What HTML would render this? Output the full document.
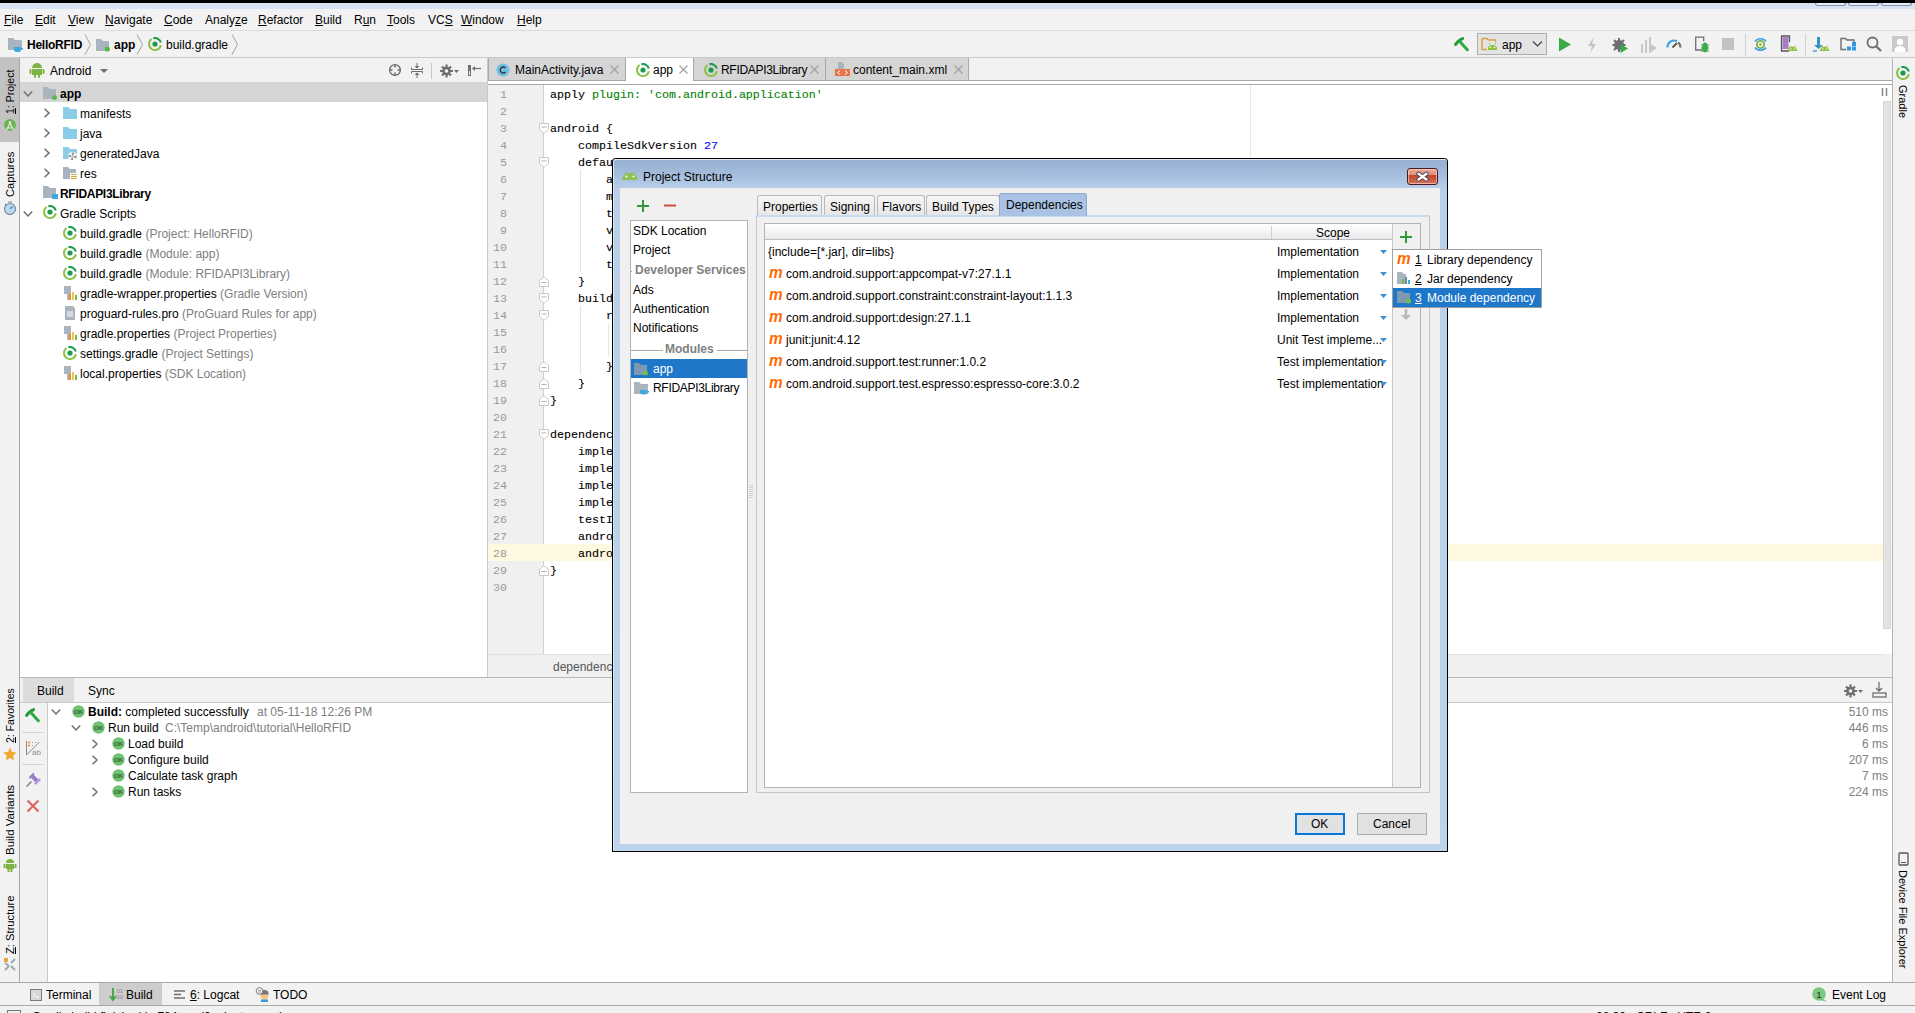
<!DOCTYPE html><html><head><meta charset="utf-8"><style>
*{margin:0;padding:0;box-sizing:border-box}
html,body{width:1915px;height:1013px;overflow:hidden;background:#f2f2f2;position:relative}
body>div,body>svg{position:absolute}
.s{position:absolute;font-family:"Liberation Sans",sans-serif;font-size:12px;line-height:14px;white-space:pre;color:#000}
.b{font-weight:bold}
.g{color:#808080}
.m{position:absolute;font-family:"Liberation Mono",monospace;font-size:11.67px;line-height:14px;white-space:pre;color:#000;-webkit-text-stroke:0.1px currentColor}
.ln{-webkit-text-stroke:0}
u{text-decoration:underline}
</style></head><body>
<div style="left:0px;top:0px;width:1915px;height:3px;background:#000"></div>
<div style="left:0px;top:3px;width:1915px;height:6px;background:#d6e3f1"></div>
<div style="left:1815px;top:2px;width:31px;height:4px;background:#e6eefa;border:1px solid #8590a8;border-top:none;border-radius:0 0 3px 3px"></div>
<div style="left:1848px;top:2px;width:31px;height:4px;background:#e6eefa;border:1px solid #8590a8;border-top:none;border-radius:0 0 3px 3px"></div>
<div style="left:1881px;top:2px;width:31px;height:4px;background:#e6eefa;border:1px solid #8590a8;border-top:none;border-radius:0 0 3px 3px"></div>
<div style="left:0px;top:0px;width:1915px;height:3px;background:#000"></div>
<div style="left:0px;top:9px;width:1915px;height:22px;background:#f2f2f2"></div>
<div style="left:0px;top:30px;width:1915px;height:1px;background:#dadada"></div>
<div class="s" style="left:4px;top:13px;"><u>F</u>ile</div>
<div class="s" style="left:35px;top:13px;"><u>E</u>dit</div>
<div class="s" style="left:68px;top:13px;"><u>V</u>iew</div>
<div class="s" style="left:105px;top:13px;"><u>N</u>avigate</div>
<div class="s" style="left:164px;top:13px;"><u>C</u>ode</div>
<div class="s" style="left:205px;top:13px;">Analy<u>z</u>e</div>
<div class="s" style="left:258px;top:13px;"><u>R</u>efactor</div>
<div class="s" style="left:315px;top:13px;"><u>B</u>uild</div>
<div class="s" style="left:354px;top:13px;">R<u>u</u>n</div>
<div class="s" style="left:387px;top:13px;"><u>T</u>ools</div>
<div class="s" style="left:428px;top:13px;">VC<u>S</u></div>
<div class="s" style="left:461px;top:13px;"><u>W</u>indow</div>
<div class="s" style="left:517px;top:13px;"><u>H</u>elp</div>
<div style="left:0px;top:31px;width:1915px;height:26px;background:#f2f2f2"></div>
<div style="left:0px;top:57px;width:1915px;height:1px;background:#c9c9c9"></div>
<svg style="position:absolute;left:7px;top:37px;" width="18" height="16" viewBox="0 0 18 16"><path d="M1 1h5l2 2h7v10h-14z" fill="#a9b4bf"/><path d="M7 10h7v2.5a2.5 2.5 0 0 1-2.5 2.5h-2a2.5 2.5 0 0 1-2.5-2.5z" fill="#40a6de"/><path d="M14 11h2v1.5h-2z" fill="#40a6de"/></svg>
<div class="s b" style="left:27px;top:38px;letter-spacing:-0.25px">HelloRFID</div>
<svg style="position:absolute;left:84px;top:34px;" width="8" height="21" viewBox="0 0 8 21"><path d="M1 0.5L6.5 10.5L1 20.5" fill="none" stroke="#a0a0a0" stroke-width="1"/></svg>
<svg style="position:absolute;left:95px;top:38px;" width="16" height="14" viewBox="0 0 16 14"><path d="M1 1h5l2 2h6v10h-13z" fill="#a9b4bf"/><circle cx="12.3" cy="11" r="2.6" fill="#59b84a"/></svg>
<div class="s b" style="left:114px;top:38px;">app</div>
<svg style="position:absolute;left:136px;top:34px;" width="8" height="21" viewBox="0 0 8 21"><path d="M1 0.5L6.5 10.5L1 20.5" fill="none" stroke="#a0a0a0" stroke-width="1"/></svg>
<svg style="position:absolute;left:148px;top:37px;" width="14" height="14" viewBox="0 0 14 14"><path d="M12.87 8.25A6 6 0 1 1 3.64 2.03" fill="none" stroke="#8bc34a" stroke-width="2"/><path d="M5.35 1.23A6 6 0 0 1 12.82 5.55" fill="none" stroke="#1d9a4e" stroke-width="2"/><circle cx="7" cy="7" r="2.6" fill="#1d9a4e"/></svg>
<div class="s" style="left:166px;top:38px;">build.gradle</div>
<svg style="position:absolute;left:231px;top:34px;" width="8" height="21" viewBox="0 0 8 21"><path d="M1 0.5L6.5 10.5L1 20.5" fill="none" stroke="#a0a0a0" stroke-width="1"/></svg>
<svg style="position:absolute;left:1452px;top:35px;" width="17" height="17" viewBox="0 0 17 17"><path d="M3.6 9.4Q6.5 5 10.6 3.6" fill="none" stroke="#1f9a3a" stroke-width="3" stroke-linecap="round"/><path d="M7.8 6.5L15.3 14.8" fill="none" stroke="#2eaa44" stroke-width="3" stroke-linecap="round"/></svg>
<div style="left:1477px;top:33px;width:70px;height:22px;background:#e4e4e4;border:1px solid #adadad"></div>
<svg style="position:absolute;left:1481px;top:37px;" width="18" height="15" viewBox="0 0 18 15"><path d="M1 1.5h5l1.5 1.5h7v2M1 1.5v11h5" fill="none" stroke="#d9a343" stroke-width="1.5"/><path d="M7 13a4.5 4 0 0 1 9 0z" fill="#8fbf3f" transform="translate(0 -1)"/><rect x="7" y="10" width="9" height="3" fill="#8fbf3f"/><circle cx="9.5" cy="10.5" r="0.8" fill="#fff"/><circle cx="13.5" cy="10.5" r="0.8" fill="#fff"/><path d="M8 6l1 1.5M15 6l-1 1.5" stroke="#8fbf3f"/></svg>
<div class="s" style="left:1502px;top:38px;">app</div>
<svg style="position:absolute;left:1532px;top:40px;" width="11" height="8" viewBox="0 0 11 8"><path d="M1 1.5l4.5 4.5 4.5-4.5" fill="none" stroke="#444" stroke-width="1.2"/></svg>
<svg style="position:absolute;left:1558px;top:36px;" width="14" height="17" viewBox="0 0 14 17"><path d="M1 1.5l12 7-12 7z" fill="#3aaa48"/></svg>
<svg style="position:absolute;left:1587px;top:37px;" width="12" height="16" viewBox="0 0 12 16"><path d="M7 0l-6 9h4l-2 7 6-9h-4z" fill="#c4c4c4"/></svg>
<svg style="position:absolute;left:1611px;top:36px;" width="18" height="17" viewBox="0 0 18 17"><circle cx="8" cy="9" r="5" fill="#6e6e6e"/><path d="M8 2v14M1.5 9h13M3 4l10 10M13 4l-10 10" stroke="#6e6e6e" stroke-width="2"/><path d="M9.5 8l7.5 4.5-7.5 4.5z" fill="#3aaa48"/></svg>
<svg style="position:absolute;left:1640px;top:36px;" width="17" height="17" viewBox="0 0 17 17"><path d="M1 8h2v9h-2zM5 4h2v13h-2zM9 1h2v16h-2z" fill="#c8c8c8"/><path d="M9 7l8 5-8 5z" fill="#c8c8c8"/></svg>
<svg style="position:absolute;left:1666px;top:37px;" width="16" height="12" viewBox="0 0 16 12"><path d="M1.5 10.5A6.5 6.5 0 0 1 11 4.3" fill="none" stroke="#3aa0e8" stroke-width="2.2"/><path d="M12.2 5.3A6.5 6.5 0 0 1 14.5 10.5" fill="none" stroke="#6e6e6e" stroke-width="2.2"/><path d="M6.5 10.5l4.5-4.5" stroke="#555" stroke-width="2"/></svg>
<svg style="position:absolute;left:1694px;top:36px;" width="16" height="18" viewBox="0 0 16 18"><path d="M8 14h-6.3v-12.8h8v4" fill="none" stroke="#6e6e6e" stroke-width="1.3"/><ellipse cx="11" cy="11.5" rx="3" ry="5" fill="#3aaa48"/><path d="M7 9h8M7 12h8M7 15h8" stroke="#3aaa48" stroke-width="1.2"/></svg>
<div style="left:1722px;top:38px;width:12px;height:12px;background:#c2c2c2"></div>
<div style="left:1745px;top:34px;width:1px;height:22px;background:#d0d0d0"></div>
<svg style="position:absolute;left:1753px;top:36px;" width="15" height="17" viewBox="0 0 15 17"><path d="M2 5.5A6.5 6 0 0 1 13 5.5" fill="none" stroke="#3aa0e8" stroke-width="1.6"/><path d="M13 11.5A6.5 6 0 0 1 2 11.5" fill="none" stroke="#3aa0e8" stroke-width="1.6"/><circle cx="7.5" cy="8.5" r="3.6" fill="none" stroke="#7cb342" stroke-width="1.8"/><circle cx="7.5" cy="8.5" r="1.2" fill="#7cb342"/></svg>
<svg style="position:absolute;left:1780px;top:35px;" width="18" height="18" viewBox="0 0 18 18"><path d="M9 16h-7.5v-15h8v6" fill="none" stroke="#555" stroke-width="1.3"/><rect x="2.5" y="2" width="6" height="12" fill="#a57fc0"/><g transform="translate(8 10)"><path d="M0 6a4.5 4.5 0 0 1 9 0z" fill="#8fbf3f"/><circle cx="2.8" cy="4" r="0.7" fill="#fff"/><circle cx="6.2" cy="4" r="0.7" fill="#fff"/><path d="M1 0.5l1 1.5M8 0.5l-1 1.5" stroke="#8fbf3f" stroke-width="0.9"/></g></svg>
<div style="left:1805px;top:34px;width:1px;height:22px;background:#d0d0d0"></div>
<svg style="position:absolute;left:1812px;top:36px;" width="18" height="17" viewBox="0 0 18 17"><path d="M5 1h3v8h3l-4.5 4-4.5-4h3z" fill="#3592c4"/><path d="M1 15h4" stroke="#3592c4" stroke-width="1.3"/><g transform="translate(8 9)"><path d="M0 6a4.5 4.5 0 0 1 9 0z" fill="#8fbf3f"/><circle cx="2.8" cy="4" r="0.7" fill="#fff"/><circle cx="6.2" cy="4" r="0.7" fill="#fff"/><path d="M1 0.5l1 1.5M8 0.5l-1 1.5" stroke="#8fbf3f" stroke-width="0.9"/></g></svg>
<svg style="position:absolute;left:1840px;top:37px;" width="17" height="14" viewBox="0 0 17 14"><path d="M6 12.5h-5v-11h4.5l1.5 1.5h7v2.5" fill="none" stroke="#6e6e6e" stroke-width="1.4"/><rect x="12" y="5" width="4" height="4" fill="#2c9ae0"/><rect x="7" y="9.5" width="4" height="4" fill="#2c9ae0"/><rect x="12" y="9.5" width="4" height="4" fill="#2c9ae0"/></svg>
<svg style="position:absolute;left:1866px;top:36px;" width="16" height="16" viewBox="0 0 16 16"><circle cx="6.5" cy="6.5" r="5" fill="none" stroke="#6e6e6e" stroke-width="1.8"/><path d="M10 10l5 5" stroke="#6e6e6e" stroke-width="2.2"/></svg>
<svg style="position:absolute;left:1892px;top:36px;" width="16" height="16" viewBox="0 0 16 16"><rect x="0" y="0" width="16" height="16" fill="#c8c8c8"/><circle cx="8" cy="6" r="3.2" fill="#fff"/><path d="M2.5 16v-2a5.5 4 0 0 1 11 0v2z" fill="#fff"/></svg>
<div style="left:0px;top:58px;width:19px;height:924px;background:#f2f2f2"></div>
<div style="left:19px;top:58px;width:1px;height:924px;background:#a8a8a8"></div>
<div style="left:20px;top:58px;width:467px;height:24px;background:#f2f2f2"></div>
<div style="left:20px;top:82px;width:467px;height:595px;background:#fff"></div>
<div style="left:20px;top:82px;width:467px;height:20px;background:#d5d5d5"></div>
<div style="left:487px;top:58px;width:1px;height:620px;background:#c9c9c9"></div>
<div style="left:0px;top:58px;width:19px;height:84px;background:#c2c2c2"></div>
<div class="s" style="left:3px;top:114px;font-size:10.5px;transform-origin:0 0;transform:rotate(-90deg)"><u>1</u>: Project</div>
<svg style="position:absolute;left:3px;top:118px;" width="14" height="14" viewBox="0 0 14 14"><circle cx="7" cy="7" r="6" fill="#6db34f"/><path d="M3.5 12l3.5-7 3.5 7M5 10h4" fill="none" stroke="#e8e8e8" stroke-width="1.2"/><circle cx="7" cy="4.5" r="1.3" fill="#e8e8e8"/></svg>
<div class="s" style="left:3px;top:197px;font-size:11.2px;transform-origin:0 0;transform:rotate(-90deg)">Captures</div>
<svg style="position:absolute;left:3px;top:201px;" width="14" height="14" viewBox="0 0 14 14"><circle cx="7" cy="8" r="5.5" fill="#b9d8f2" stroke="#7b8797" stroke-width="1.2"/><path d="M7 8l2.5-2.5" stroke="#4f8fc7" stroke-width="1.5"/><path d="M5 1h4M2 3l1.5 1.5" stroke="#7b8797" stroke-width="1.2"/></svg>
<svg style="position:absolute;left:29px;top:62px;" width="16" height="16" viewBox="0 0 16 16"><path d="M3 6a5 5 0 0 1 10 0z" fill="#7cb342"/><path d="M5 2l1.5 2M11 2l-1.5 2" stroke="#7cb342" stroke-width="1"/><rect x="3" y="7" width="10" height="6" fill="#7cb342"/><rect x="0.5" y="7" width="2" height="5" rx="1" fill="#7cb342"/><rect x="13.5" y="7" width="2" height="5" rx="1" fill="#7cb342"/><rect x="5" y="12" width="2" height="4" rx="1" fill="#7cb342"/><rect x="9" y="12" width="2" height="4" rx="1" fill="#7cb342"/></svg>
<div class="s" style="left:50px;top:64px;">Android</div>
<svg style="position:absolute;left:100px;top:69px;" width="9" height="5" viewBox="0 0 9 5"><path d="M0 0h8l-4 4z" fill="#6e6e6e"/></svg>
<svg style="position:absolute;left:388px;top:63px;" width="14" height="14" viewBox="0 0 14 14"><circle cx="7" cy="7" r="5.4" fill="none" stroke="#6e6e6e" stroke-width="1.4"/><path d="M7 2v2.5M7 9.5v2.5M2 7h2.5M9.5 7h2.5" stroke="#6e6e6e" stroke-width="1.6"/></svg>
<svg style="position:absolute;left:411px;top:63px;" width="12" height="15" viewBox="0 0 12 15"><path d="M0.5 4.5v2h11v-2M0.5 10.5v-2h11v2" fill="none" stroke="#6e6e6e" stroke-width="1"/><path d="M6 0v5M6 15v-5" stroke="#6e6e6e" stroke-width="1"/><path d="M3.5 3l2.5 2.5 2.5-2.5zM3.5 12l2.5-2.5 2.5 2.5z" fill="#6e6e6e"/></svg>
<div style="left:431px;top:63px;width:1px;height:16px;background:#c8c8c8"></div>
<svg style="position:absolute;left:440px;top:64px;" width="20" height="14" viewBox="0 0 20 14"><circle cx="6.5" cy="7" r="4.3" fill="#6e6e6e"/><circle cx="6.5" cy="7" r="1.6" fill="#f2f2f2"/><path d="M6.5 0.5v13M0 7h13M2 2.5l9 9M11 2.5l-9 9" stroke="#6e6e6e" stroke-width="2.2"/><circle cx="6.5" cy="7" r="1.8" fill="#f2f2f2"/><path d="M14 6h5l-2.5 3z" fill="#6e6e6e"/></svg>
<svg style="position:absolute;left:467px;top:64px;" width="14" height="13" viewBox="0 0 14 13"><rect x="1" y="1" width="3" height="11" fill="#6e6e6e"/><rect x="2" y="7" width="1" height="4" fill="#f2f2f2"/><path d="M6 4.5h8" stroke="#6e6e6e" stroke-width="1.2"/><path d="M5 4.5l3-2.5v5z" fill="#6e6e6e"/></svg>
<svg style="position:absolute;left:23px;top:90px;" width="10" height="8" viewBox="0 0 10 8"><path d="M0.8 1.5l4.2 4.5 4.2-4.5" fill="none" stroke="#6e6e6e" stroke-width="1.5"/></svg>
<svg style="position:absolute;left:42px;top:86px;" width="16" height="14" viewBox="0 0 16 14"><path d="M1 1h5l2 2h6v10h-13z" fill="#a9b4bf"/><circle cx="12.5" cy="11.5" r="2.5" fill="#59b84a"/></svg>
<div class="s b" style="left:60px;top:87px;">app</div>
<svg style="position:absolute;left:43px;top:108px;" width="8" height="10" viewBox="0 0 8 10"><path d="M1.5 0.8l4.5 4.2-4.5 4.2" fill="none" stroke="#6e6e6e" stroke-width="1.5"/></svg>
<svg style="position:absolute;left:62px;top:106px;" width="16" height="14" viewBox="0 0 16 14"><path d="M1 1h5l2 2h7v10h-14z" fill="#8acde9"/></svg>
<div class="s" style="left:80px;top:107px;">manifests</div>
<svg style="position:absolute;left:43px;top:128px;" width="8" height="10" viewBox="0 0 8 10"><path d="M1.5 0.8l4.5 4.2-4.5 4.2" fill="none" stroke="#6e6e6e" stroke-width="1.5"/></svg>
<svg style="position:absolute;left:62px;top:126px;" width="16" height="14" viewBox="0 0 16 14"><path d="M1 1h5l2 2h7v10h-14z" fill="#8acde9"/></svg>
<div class="s" style="left:80px;top:127px;">java</div>
<svg style="position:absolute;left:43px;top:148px;" width="8" height="10" viewBox="0 0 8 10"><path d="M1.5 0.8l4.5 4.2-4.5 4.2" fill="none" stroke="#6e6e6e" stroke-width="1.5"/></svg>
<svg style="position:absolute;left:62px;top:146px;" width="16" height="14" viewBox="0 0 16 14"><path d="M1 1h5l2 2h7v10h-14z" fill="#8acde9"/><circle cx="10.5" cy="10.5" r="4.5" fill="#fff"/><path d="M10.5 10.5l-1-3.5a2 2 0 0 1 3 .5zM10.5 10.5l3.5-1a2 2 0 0 1-.5 3zM10.5 10.5l1 3.5a2 2 0 0 1-3-.5zM10.5 10.5l-3.5 1a2 2 0 0 1 .5-3z" fill="#999"/></svg>
<div class="s" style="left:80px;top:147px;">generatedJava</div>
<svg style="position:absolute;left:43px;top:168px;" width="8" height="10" viewBox="0 0 8 10"><path d="M1.5 0.8l4.5 4.2-4.5 4.2" fill="none" stroke="#6e6e6e" stroke-width="1.5"/></svg>
<svg style="position:absolute;left:62px;top:166px;" width="16" height="14" viewBox="0 0 16 14"><path d="M1 1h5l2 2h6v10h-13z" fill="#a9b4bf"/><rect x="8" y="7" width="8" height="8" fill="#fff"/><path d="M9 8.5h6M9 10.5h6M9 12.5h6M9 14.5h6" stroke="#e0a040" stroke-width="1"/></svg>
<div class="s" style="left:80px;top:167px;">res</div>
<svg style="position:absolute;left:42px;top:185px;" width="16" height="14" viewBox="0 0 16 14"><path d="M1 1h5l2 2h6v10h-13z" fill="#a9b4bf"/><rect x="10" y="9" width="6" height="5" fill="#40a6de"/></svg>
<div class="s b" style="left:60px;top:187px;letter-spacing:-0.3px">RFIDAPI3Library</div>
<svg style="position:absolute;left:23px;top:210px;" width="10" height="8" viewBox="0 0 10 8"><path d="M0.8 1.5l4.2 4.5 4.2-4.5" fill="none" stroke="#6e6e6e" stroke-width="1.5"/></svg>
<svg style="position:absolute;left:43px;top:205px;" width="14" height="14" viewBox="0 0 14 14"><path d="M12.87 8.25A6 6 0 1 1 3.64 2.03" fill="none" stroke="#8bc34a" stroke-width="2"/><path d="M5.35 1.23A6 6 0 0 1 12.82 5.55" fill="none" stroke="#1d9a4e" stroke-width="2"/><circle cx="7" cy="7" r="2.6" fill="#1d9a4e"/></svg>
<div class="s" style="left:60px;top:207px;">Gradle Scripts</div>
<svg style="position:absolute;left:63px;top:226px;" width="14" height="14" viewBox="0 0 14 14"><path d="M12.87 8.25A6 6 0 1 1 3.64 2.03" fill="none" stroke="#8bc34a" stroke-width="2"/><path d="M5.35 1.23A6 6 0 0 1 12.82 5.55" fill="none" stroke="#1d9a4e" stroke-width="2"/><circle cx="7" cy="7" r="2.6" fill="#1d9a4e"/></svg>
<div class="s" style="left:80px;top:227px">build.gradle <span class="g">(Project: HelloRFID)</span></div>
<svg style="position:absolute;left:63px;top:246px;" width="14" height="14" viewBox="0 0 14 14"><path d="M12.87 8.25A6 6 0 1 1 3.64 2.03" fill="none" stroke="#8bc34a" stroke-width="2"/><path d="M5.35 1.23A6 6 0 0 1 12.82 5.55" fill="none" stroke="#1d9a4e" stroke-width="2"/><circle cx="7" cy="7" r="2.6" fill="#1d9a4e"/></svg>
<div class="s" style="left:80px;top:247px">build.gradle <span class="g">(Module: app)</span></div>
<svg style="position:absolute;left:63px;top:266px;" width="14" height="14" viewBox="0 0 14 14"><path d="M12.87 8.25A6 6 0 1 1 3.64 2.03" fill="none" stroke="#8bc34a" stroke-width="2"/><path d="M5.35 1.23A6 6 0 0 1 12.82 5.55" fill="none" stroke="#1d9a4e" stroke-width="2"/><circle cx="7" cy="7" r="2.6" fill="#1d9a4e"/></svg>
<div class="s" style="left:80px;top:267px">build.gradle <span class="g">(Module: RFIDAPI3Library)</span></div>
<svg style="position:absolute;left:63px;top:285px;" width="14" height="16" viewBox="0 0 14 16"><path d="M1 1h7v4h-3v4h-4z" fill="#a9b4bf"/><path d="M4 4h4v11h-4z" fill="#a9b4bf"/><rect x="6" y="9" width="2" height="6" fill="#f08a24"/><rect x="9" y="7" width="2" height="8" fill="#f5c342"/><rect x="12" y="10" width="2" height="5" fill="#6abf4b"/></svg>
<div class="s" style="left:80px;top:287px">gradle-wrapper.properties <span class="g">(Gradle Version)</span></div>
<svg style="position:absolute;left:63px;top:305px;" width="14" height="16" viewBox="0 0 14 16"><path d="M2 1h8l2 2v12h-10z" fill="#a9b4bf"/><path d="M4 7h6M4 9h6M4 11h6" stroke="#fff" stroke-width="1"/></svg>
<div class="s" style="left:80px;top:307px">proguard-rules.pro <span class="g">(ProGuard Rules for app)</span></div>
<svg style="position:absolute;left:63px;top:325px;" width="14" height="16" viewBox="0 0 14 16"><path d="M1 1h7v4h-3v4h-4z" fill="#a9b4bf"/><path d="M4 4h4v11h-4z" fill="#a9b4bf"/><rect x="6" y="9" width="2" height="6" fill="#f08a24"/><rect x="9" y="7" width="2" height="8" fill="#f5c342"/><rect x="12" y="10" width="2" height="5" fill="#6abf4b"/></svg>
<div class="s" style="left:80px;top:327px">gradle.properties <span class="g">(Project Properties)</span></div>
<svg style="position:absolute;left:63px;top:346px;" width="14" height="14" viewBox="0 0 14 14"><path d="M12.87 8.25A6 6 0 1 1 3.64 2.03" fill="none" stroke="#8bc34a" stroke-width="2"/><path d="M5.35 1.23A6 6 0 0 1 12.82 5.55" fill="none" stroke="#1d9a4e" stroke-width="2"/><circle cx="7" cy="7" r="2.6" fill="#1d9a4e"/></svg>
<div class="s" style="left:80px;top:347px">settings.gradle <span class="g">(Project Settings)</span></div>
<svg style="position:absolute;left:63px;top:365px;" width="14" height="16" viewBox="0 0 14 16"><path d="M1 1h7v4h-3v4h-4z" fill="#a9b4bf"/><path d="M4 4h4v11h-4z" fill="#a9b4bf"/><rect x="6" y="9" width="2" height="6" fill="#f08a24"/><rect x="9" y="7" width="2" height="8" fill="#f5c342"/><rect x="12" y="10" width="2" height="5" fill="#6abf4b"/></svg>
<div class="s" style="left:80px;top:367px">local.properties <span class="g">(SDK Location)</span></div>
<div style="left:488px;top:58px;width:1405px;height:22px;background:#f2f2f2"></div>
<div style="left:488px;top:80px;width:1404px;height:1px;background:#a8a8a8"></div>
<div style="left:488px;top:81px;width:1404px;height:3px;background:#fff"></div>
<div style="left:488px;top:84px;width:1404px;height:1px;background:#a8a8a8"></div>
<div style="left:488px;top:58px;width:138px;height:22px;background:#d5d5d5;border-right:1px solid #a8a8a8;border-left:1px solid #a8a8a8"></div>
<div style="left:626px;top:58px;width:68px;height:23px;background:#fff;border-right:1px solid #a8a8a8"></div>
<div style="left:694px;top:58px;width:132px;height:22px;background:#d5d5d5;border-right:1px solid #a8a8a8"></div>
<div style="left:826px;top:58px;width:143px;height:22px;background:#d5d5d5;border-right:1px solid #a8a8a8"></div>
<svg style="position:absolute;left:496px;top:63px;" width="14" height="14" viewBox="0 0 14 14"><circle cx="7" cy="7" r="6.5" fill="#6ec0e6"/><path d="M9.5 5a3 3 0 1 0 0 4" fill="none" stroke="#333" stroke-width="1.4"/></svg>
<div class="s" style="left:515px;top:63px;">MainActivity.java</div>
<svg style="position:absolute;left:610px;top:65px;" width="9" height="9" viewBox="0 0 9 9"><path d="M0.5 0.5l8 8M8.5 0.5l-8 8" stroke="#a0a0a0" stroke-width="1.1"/></svg>
<svg style="position:absolute;left:636px;top:63px;" width="14" height="14" viewBox="0 0 14 14"><path d="M12.87 8.25A6 6 0 1 1 3.64 2.03" fill="none" stroke="#8bc34a" stroke-width="2"/><path d="M5.35 1.23A6 6 0 0 1 12.82 5.55" fill="none" stroke="#1d9a4e" stroke-width="2"/><circle cx="7" cy="7" r="2.6" fill="#1d9a4e"/></svg>
<div class="s" style="left:653px;top:63px;">app</div>
<svg style="position:absolute;left:679px;top:65px;" width="9" height="9" viewBox="0 0 9 9"><path d="M0.5 0.5l8 8M8.5 0.5l-8 8" stroke="#a0a0a0" stroke-width="1.1"/></svg>
<svg style="position:absolute;left:704px;top:63px;" width="14" height="14" viewBox="0 0 14 14"><path d="M12.87 8.25A6 6 0 1 1 3.64 2.03" fill="none" stroke="#8bc34a" stroke-width="2"/><path d="M5.35 1.23A6 6 0 0 1 12.82 5.55" fill="none" stroke="#1d9a4e" stroke-width="2"/><circle cx="7" cy="7" r="2.6" fill="#1d9a4e"/></svg>
<div class="s" style="left:721px;top:63px;letter-spacing:-0.3px">RFIDAPI3Library</div>
<svg style="position:absolute;left:810px;top:65px;" width="9" height="9" viewBox="0 0 9 9"><path d="M0.5 0.5l8 8M8.5 0.5l-8 8" stroke="#a0a0a0" stroke-width="1.1"/></svg>
<svg style="position:absolute;left:835px;top:61px;" width="16" height="16" viewBox="0 0 16 16"><path d="M3 1h5v4h-3v3h-2z" fill="#a9b4bf"/><path d="M5 3h4v5h-4z" fill="#a9b4bf"/><rect x="0" y="8" width="15" height="7" fill="#e8744a"/><path d="M5 9.5l-2.5 2 2.5 2M10 9.5l2.5 2-2.5 2" fill="none" stroke="#fff" stroke-width="1"/></svg>
<div class="s" style="left:853px;top:63px;">content_main.xml</div>
<svg style="position:absolute;left:954px;top:65px;" width="9" height="9" viewBox="0 0 9 9"><path d="M0.5 0.5l8 8M8.5 0.5l-8 8" stroke="#a0a0a0" stroke-width="1.1"/></svg>
<div style="left:488px;top:85px;width:55px;height:569px;background:#f0f0f0"></div>
<div style="left:543px;top:85px;width:1px;height:569px;background:#d0d0d0"></div>
<div style="left:544px;top:85px;width:1338px;height:569px;background:#fff"></div>
<div style="left:1250px;top:85px;width:1px;height:569px;background:#e8e8e8"></div>
<div style="left:488px;top:544px;width:1394px;height:17px;background:#fff8e0"></div>
<div style="left:1882px;top:85px;width:10px;height:569px;background:#fff"></div>
<div style="left:1882px;top:544px;width:10px;height:17px;background:#fff8e0"></div>
<div style="left:1883px;top:101px;width:8px;height:528px;background:#e3e3e3;border:1px solid #d6d6d6"></div>
<div style="left:580px;top:170px;width:1px;height:102px;background:#e4e4e4"></div>
<div style="left:580px;top:306px;width:1px;height:68px;background:#e4e4e4"></div>
<div style="left:608px;top:323px;width:1px;height:34px;background:#e4e4e4"></div>
<div class="m ln" style="left:500px;top:88px;color:#999">1</div>
<div class="m" style="left:550px;top:88px">apply <span style="color:#008000">plugin: &#x27;com.android.application&#x27;</span></div>
<div class="m ln" style="left:500px;top:105px;color:#999">2</div>
<div class="m ln" style="left:500px;top:122px;color:#999">3</div>
<div class="m" style="left:550px;top:122px">android {</div>
<div class="m ln" style="left:500px;top:139px;color:#999">4</div>
<div class="m" style="left:550px;top:139px">    compileSdkVersion <span style="color:#0000ff">27</span></div>
<div class="m ln" style="left:500px;top:156px;color:#999">5</div>
<div class="m" style="left:550px;top:156px">    defau</div>
<div class="m ln" style="left:500px;top:173px;color:#999">6</div>
<div class="m" style="left:550px;top:173px">        a</div>
<div class="m ln" style="left:500px;top:190px;color:#999">7</div>
<div class="m" style="left:550px;top:190px">        m</div>
<div class="m ln" style="left:500px;top:207px;color:#999">8</div>
<div class="m" style="left:550px;top:207px">        t</div>
<div class="m ln" style="left:500px;top:224px;color:#999">9</div>
<div class="m" style="left:550px;top:224px">        v</div>
<div class="m ln" style="left:493px;top:241px;color:#999">10</div>
<div class="m" style="left:550px;top:241px">        v</div>
<div class="m ln" style="left:493px;top:258px;color:#999">11</div>
<div class="m" style="left:550px;top:258px">        t</div>
<div class="m ln" style="left:493px;top:275px;color:#999">12</div>
<div class="m" style="left:550px;top:275px">    }</div>
<div class="m ln" style="left:493px;top:292px;color:#999">13</div>
<div class="m" style="left:550px;top:292px">    build</div>
<div class="m ln" style="left:493px;top:309px;color:#999">14</div>
<div class="m" style="left:550px;top:309px">        r</div>
<div class="m ln" style="left:493px;top:326px;color:#999">15</div>
<div class="m ln" style="left:493px;top:343px;color:#999">16</div>
<div class="m ln" style="left:493px;top:360px;color:#999">17</div>
<div class="m" style="left:550px;top:360px">        }</div>
<div class="m ln" style="left:493px;top:377px;color:#999">18</div>
<div class="m" style="left:550px;top:377px">    }</div>
<div class="m ln" style="left:493px;top:394px;color:#999">19</div>
<div class="m" style="left:550px;top:394px">}</div>
<div class="m ln" style="left:493px;top:411px;color:#999">20</div>
<div class="m ln" style="left:493px;top:428px;color:#999">21</div>
<div class="m" style="left:550px;top:428px">dependenc</div>
<div class="m ln" style="left:493px;top:445px;color:#999">22</div>
<div class="m" style="left:550px;top:445px">    imple</div>
<div class="m ln" style="left:493px;top:462px;color:#999">23</div>
<div class="m" style="left:550px;top:462px">    imple</div>
<div class="m ln" style="left:493px;top:479px;color:#999">24</div>
<div class="m" style="left:550px;top:479px">    imple</div>
<div class="m ln" style="left:493px;top:496px;color:#999">25</div>
<div class="m" style="left:550px;top:496px">    imple</div>
<div class="m ln" style="left:493px;top:513px;color:#999">26</div>
<div class="m" style="left:550px;top:513px">    testI</div>
<div class="m ln" style="left:493px;top:530px;color:#999">27</div>
<div class="m" style="left:550px;top:530px">    andro</div>
<div class="m ln" style="left:493px;top:547px;color:#999">28</div>
<div class="m" style="left:550px;top:547px">    andro</div>
<div class="m ln" style="left:493px;top:564px;color:#999">29</div>
<div class="m" style="left:550px;top:564px">}</div>
<div class="m ln" style="left:493px;top:581px;color:#999">30</div>
<svg style="position:absolute;left:539px;top:123px;" width="11" height="11" viewBox="0 0 11 11"><path d="M0.5 0.5h9v6l-4.5 3.8-4.5-3.8z" fill="#fff" stroke="#c8c8c8"/><path d="M2.5 4h5" stroke="#b0b0b0"/></svg>
<svg style="position:absolute;left:539px;top:157px;" width="11" height="11" viewBox="0 0 11 11"><path d="M0.5 0.5h9v6l-4.5 3.8-4.5-3.8z" fill="#fff" stroke="#c8c8c8"/><path d="M2.5 4h5" stroke="#b0b0b0"/></svg>
<svg style="position:absolute;left:539px;top:293px;" width="11" height="11" viewBox="0 0 11 11"><path d="M0.5 0.5h9v6l-4.5 3.8-4.5-3.8z" fill="#fff" stroke="#c8c8c8"/><path d="M2.5 4h5" stroke="#b0b0b0"/></svg>
<svg style="position:absolute;left:539px;top:310px;" width="11" height="11" viewBox="0 0 11 11"><path d="M0.5 0.5h9v6l-4.5 3.8-4.5-3.8z" fill="#fff" stroke="#c8c8c8"/><path d="M2.5 4h5" stroke="#b0b0b0"/></svg>
<svg style="position:absolute;left:539px;top:429px;" width="11" height="11" viewBox="0 0 11 11"><path d="M0.5 0.5h9v6l-4.5 3.8-4.5-3.8z" fill="#fff" stroke="#c8c8c8"/><path d="M2.5 4h5" stroke="#b0b0b0"/></svg>
<svg style="position:absolute;left:539px;top:276px;" width="11" height="11" viewBox="0 0 11 11"><path d="M0.5 10.5h9v-6l-4.5-3.8-4.5 3.8z" fill="#fff" stroke="#c8c8c8"/><path d="M2.5 6.5h5" stroke="#b0b0b0"/></svg>
<svg style="position:absolute;left:539px;top:361px;" width="11" height="11" viewBox="0 0 11 11"><path d="M0.5 10.5h9v-6l-4.5-3.8-4.5 3.8z" fill="#fff" stroke="#c8c8c8"/><path d="M2.5 6.5h5" stroke="#b0b0b0"/></svg>
<svg style="position:absolute;left:539px;top:378px;" width="11" height="11" viewBox="0 0 11 11"><path d="M0.5 10.5h9v-6l-4.5-3.8-4.5 3.8z" fill="#fff" stroke="#c8c8c8"/><path d="M2.5 6.5h5" stroke="#b0b0b0"/></svg>
<svg style="position:absolute;left:539px;top:395px;" width="11" height="11" viewBox="0 0 11 11"><path d="M0.5 10.5h9v-6l-4.5-3.8-4.5 3.8z" fill="#fff" stroke="#c8c8c8"/><path d="M2.5 6.5h5" stroke="#b0b0b0"/></svg>
<svg style="position:absolute;left:539px;top:565px;" width="11" height="11" viewBox="0 0 11 11"><path d="M0.5 10.5h9v-6l-4.5-3.8-4.5 3.8z" fill="#fff" stroke="#c8c8c8"/><path d="M2.5 6.5h5" stroke="#b0b0b0"/></svg>
<svg style="position:absolute;left:1881px;top:88px;" width="8" height="9" viewBox="0 0 8 9"><path d="M1.5 0v8M5.5 0v8" stroke="#888" stroke-width="1.5"/></svg>
<div style="left:488px;top:654px;width:1405px;height:23px;background:#f0f0f0"></div>
<div style="left:488px;top:654px;width:1394px;height:1px;background:#e0e0e0"></div>
<div style="left:20px;top:677px;width:1873px;height:1px;background:#b8b8b8"></div>
<div class="s" style="left:553px;top:660px;color:#555">dependenc</div>
<div style="left:1892px;top:58px;width:1px;height:924px;background:#c9c9c9"></div>
<div style="left:1893px;top:58px;width:22px;height:924px;background:#f2f2f2"></div>
<div style="left:20px;top:678px;width:1873px;height:24px;background:#f2f2f2"></div>
<div style="left:20px;top:702px;width:1873px;height:1px;background:#c9c9c9"></div>
<div style="left:20px;top:703px;width:27px;height:279px;background:#f2f2f2"></div>
<div style="left:47px;top:703px;width:1px;height:279px;background:#c9c9c9"></div>
<div style="left:48px;top:703px;width:1845px;height:279px;background:#fff"></div>
<div style="left:1892px;top:58px;width:1px;height:924px;background:#b4b4b4"></div>
<div style="left:23px;top:678px;width:51px;height:24px;background:#dcdcdc"></div>
<div class="s" style="left:37px;top:684px;">Build</div>
<div class="s" style="left:88px;top:684px;">Sync</div>
<svg style="position:absolute;left:1844px;top:684px;" width="20" height="14" viewBox="0 0 20 14"><circle cx="6.5" cy="7" r="4.3" fill="#6e6e6e"/><path d="M6.5 0.5v13M0 7h13M2 2.5l9 9M11 2.5l-9 9" stroke="#6e6e6e" stroke-width="2.2"/><circle cx="6.5" cy="7" r="1.8" fill="#f2f2f2"/><path d="M14 6h5l-2.5 3z" fill="#6e6e6e"/></svg>
<svg style="position:absolute;left:1872px;top:682px;" width="15" height="16" viewBox="0 0 15 16"><path d="M7 0v9M4 6l3 3 3-3" fill="none" stroke="#6e6e6e" stroke-width="1.3"/><rect x="1" y="11" width="13" height="4" fill="none" stroke="#6e6e6e" stroke-width="1.3"/></svg>
<svg style="position:absolute;left:23px;top:706px;" width="17" height="17" viewBox="0 0 17 17"><path d="M3.6 9.4Q6.5 5 10.6 3.6" fill="none" stroke="#1f9a3a" stroke-width="3" stroke-linecap="round"/><path d="M7.8 6.5L15.3 14.8" fill="none" stroke="#2eaa44" stroke-width="3" stroke-linecap="round"/></svg>
<div style="left:22px;top:732px;width:22px;height:1px;background:#d5d5d5"></div>
<svg style="position:absolute;left:25px;top:740px;" width="16" height="16" viewBox="0 0 16 16"><path d="M1.5 1v14M1.5 15l13-13" stroke="#8a8a8a" stroke-width="1"/><path d="M3 2.5h2M3 5.5h2" stroke="#d98c2c" stroke-width="1.6"/><path d="M7 2.5h1M10 2.5h1M7 5.5h1" stroke="#999" stroke-width="1"/><text x="7" y="15" font-family="Liberation Sans" font-size="8" fill="#8a8a8a">ab</text></svg>
<div style="left:22px;top:764px;width:22px;height:1px;background:#d5d5d5"></div>
<svg style="position:absolute;left:25px;top:772px;" width="16" height="16" viewBox="0 0 16 16"><path d="M1.5 14.5l5-5" stroke="#888" stroke-width="1.6"/><g transform="rotate(45 9.5 6.5)"><rect x="6" y="4.5" width="7" height="4" rx="1" fill="#9d7cc8"/><rect x="4.5" y="3" width="2" height="7" rx="1" fill="#9d7cc8"/><rect x="12.5" y="2.5" width="2.5" height="8" rx="1.2" fill="#b89ae0"/></g></svg>
<svg style="position:absolute;left:26px;top:799px;" width="14" height="14" viewBox="0 0 14 14"><path d="M1.5 1.5l11 11M12.5 1.5l-11 11" stroke="#e06666" stroke-width="2.2"/></svg>
<svg style="position:absolute;left:51px;top:708px;" width="10" height="8" viewBox="0 0 10 8"><path d="M0.8 1.5l4.2 4.5 4.2-4.5" fill="none" stroke="#6e6e6e" stroke-width="1.5"/></svg>
<svg style="position:absolute;left:72px;top:705px;" width="13" height="13" viewBox="0 0 13 13"><circle cx="6.5" cy="6.5" r="6.2" fill="#6fc173"/><text x="6.5" y="8.6" font-family="Liberation Sans" font-size="6" font-weight="bold" fill="#2f5f33" text-anchor="middle">OK</text></svg>
<div class="s" style="left:88px;top:705px"><b>Build:</b> completed successfully</div>
<div class="s g" style="left:257px;top:705px;">at 05-11-18 12:26 PM</div>
<svg style="position:absolute;left:71px;top:724px;" width="10" height="8" viewBox="0 0 10 8"><path d="M0.8 1.5l4.2 4.5 4.2-4.5" fill="none" stroke="#6e6e6e" stroke-width="1.5"/></svg>
<svg style="position:absolute;left:92px;top:721px;" width="13" height="13" viewBox="0 0 13 13"><circle cx="6.5" cy="6.5" r="6.2" fill="#6fc173"/><text x="6.5" y="8.6" font-family="Liberation Sans" font-size="6" font-weight="bold" fill="#2f5f33" text-anchor="middle">OK</text></svg>
<div class="s" style="left:108px;top:721px;">Run build</div>
<div class="s g" style="left:165px;top:721px;">C:\Temp\android\tutorial\HelloRFID</div>
<svg style="position:absolute;left:91px;top:739px;" width="8" height="10" viewBox="0 0 8 10"><path d="M1.5 0.8l4.5 4.2-4.5 4.2" fill="none" stroke="#6e6e6e" stroke-width="1.5"/></svg>
<svg style="position:absolute;left:112px;top:737px;" width="13" height="13" viewBox="0 0 13 13"><circle cx="6.5" cy="6.5" r="6.2" fill="#6fc173"/><text x="6.5" y="8.6" font-family="Liberation Sans" font-size="6" font-weight="bold" fill="#2f5f33" text-anchor="middle">OK</text></svg>
<div class="s" style="left:128px;top:737px;">Load build</div>
<svg style="position:absolute;left:91px;top:755px;" width="8" height="10" viewBox="0 0 8 10"><path d="M1.5 0.8l4.5 4.2-4.5 4.2" fill="none" stroke="#6e6e6e" stroke-width="1.5"/></svg>
<svg style="position:absolute;left:112px;top:753px;" width="13" height="13" viewBox="0 0 13 13"><circle cx="6.5" cy="6.5" r="6.2" fill="#6fc173"/><text x="6.5" y="8.6" font-family="Liberation Sans" font-size="6" font-weight="bold" fill="#2f5f33" text-anchor="middle">OK</text></svg>
<div class="s" style="left:128px;top:753px;">Configure build</div>
<svg style="position:absolute;left:112px;top:769px;" width="13" height="13" viewBox="0 0 13 13"><circle cx="6.5" cy="6.5" r="6.2" fill="#6fc173"/><text x="6.5" y="8.6" font-family="Liberation Sans" font-size="6" font-weight="bold" fill="#2f5f33" text-anchor="middle">OK</text></svg>
<div class="s" style="left:128px;top:769px;">Calculate task graph</div>
<svg style="position:absolute;left:91px;top:787px;" width="8" height="10" viewBox="0 0 8 10"><path d="M1.5 0.8l4.5 4.2-4.5 4.2" fill="none" stroke="#6e6e6e" stroke-width="1.5"/></svg>
<svg style="position:absolute;left:112px;top:785px;" width="13" height="13" viewBox="0 0 13 13"><circle cx="6.5" cy="6.5" r="6.2" fill="#6fc173"/><text x="6.5" y="8.6" font-family="Liberation Sans" font-size="6" font-weight="bold" fill="#2f5f33" text-anchor="middle">OK</text></svg>
<div class="s" style="left:128px;top:785px;">Run tasks</div>
<div class="s g" style="left:1788px;width:100px;text-align:right;top:705px">510 ms</div>
<div class="s g" style="left:1788px;width:100px;text-align:right;top:721px">446 ms</div>
<div class="s g" style="left:1788px;width:100px;text-align:right;top:737px">6 ms</div>
<div class="s g" style="left:1788px;width:100px;text-align:right;top:753px">207 ms</div>
<div class="s g" style="left:1788px;width:100px;text-align:right;top:769px">7 ms</div>
<div class="s g" style="left:1788px;width:100px;text-align:right;top:785px">224 ms</div>
<div class="s" style="left:3px;top:743px;font-size:10.5px;transform-origin:0 0;transform:rotate(-90deg)"><u>2</u>: Favorites</div>
<svg style="position:absolute;left:3px;top:747px;" width="14" height="14" viewBox="0 0 14 14"><path d="M7 0.5l2 4.4 4.8 0.5-3.6 3.2 1 4.7-4.2-2.4-4.2 2.4 1-4.7-3.6-3.2 4.8-0.5z" fill="#f0a732"/></svg>
<div class="s" style="left:3px;top:855px;font-size:11.5px;transform-origin:0 0;transform:rotate(-90deg)">Build Variants</div>
<svg style="position:absolute;left:3px;top:858px;" width="14" height="15" viewBox="0 0 14 15"><path d="M3 5a4 4 0 0 1 8 0z" fill="#7cb342"/><rect x="3" y="6" width="8" height="5" fill="#7cb342"/><rect x="0.5" y="6" width="2" height="4" fill="#7cb342"/><rect x="11.5" y="6" width="2" height="4" fill="#7cb342"/><rect x="4.5" y="11" width="2" height="3" fill="#7cb342"/><rect x="7.5" y="11" width="2" height="3" fill="#7cb342"/></svg>
<div class="s" style="left:3px;top:954px;font-size:11.2px;transform-origin:0 0;transform:rotate(-90deg)"><u>Z</u>: Structure</div>
<svg style="position:absolute;left:3px;top:957px;" width="14" height="14" viewBox="0 0 14 14"><rect x="1" y="1" width="4" height="4" fill="#e8a33c"/><path d="M2 6l4 3M12 2l-4 4M2 13l4-4M12 13l-4-4" stroke="#9aa7b4" stroke-width="2"/></svg>
<svg style="position:absolute;left:1896px;top:66px;" width="14" height="14" viewBox="0 0 14 14"><path d="M12.87 8.25A6 6 0 1 1 3.64 2.03" fill="none" stroke="#8bc34a" stroke-width="2"/><path d="M5.35 1.23A6 6 0 0 1 12.82 5.55" fill="none" stroke="#1d9a4e" stroke-width="2"/><circle cx="7" cy="7" r="2.6" fill="#1d9a4e"/></svg>
<div class="s" style="left:1910px;top:85px;font-size:11px;transform-origin:0 0;transform:rotate(90deg)">Gradle</div>
<svg style="position:absolute;left:1898px;top:852px;" width="11" height="14" viewBox="0 0 11 14"><rect x="1" y="1" width="9" height="12" rx="1" fill="none" stroke="#555" stroke-width="1.3"/><path d="M3 10.5h5" stroke="#555"/></svg>
<div class="s" style="left:1910px;top:870px;font-size:11px;transform-origin:0 0;transform:rotate(90deg)">Device File Explorer</div>
<div style="left:0px;top:982px;width:1915px;height:1px;background:#a8a8a8"></div>
<div style="left:0px;top:983px;width:1915px;height:22px;background:#f2f2f2"></div>
<div style="left:0px;top:1005px;width:1915px;height:1px;background:#a8a8a8"></div>
<div style="left:0px;top:1006px;width:1915px;height:7px;background:#f2f2f2"></div>
<div style="left:99px;top:983px;width:63px;height:22px;background:#cdcdcd"></div>
<svg style="position:absolute;left:30px;top:989px;" width="12" height="12" viewBox="0 0 12 12"><rect x="0.5" y="0.5" width="11" height="11" fill="#d8d8d8" stroke="#7a7a7a"/><path d="M3 4l2 2-2 2M6 8h3" stroke="#fff" fill="none"/></svg>
<div class="s" style="left:46px;top:988px;">Terminal</div>
<svg style="position:absolute;left:109px;top:987px;" width="14" height="15" viewBox="0 0 14 15"><path d="M4 1v11M1 9l3 4 3-4" fill="none" stroke="#3fa43f" stroke-width="1.8"/><text x="7.5" y="6" font-family="Liberation Sans" font-size="6" fill="#8a8a8a">01</text><text x="7.5" y="12" font-family="Liberation Sans" font-size="6" fill="#8a8a8a">10</text></svg>
<div class="s" style="left:126px;top:988px;">Build</div>
<svg style="position:absolute;left:174px;top:990px;" width="12" height="10" viewBox="0 0 12 10"><path d="M0 1h11M0 4.5h7M0 8h11" stroke="#6e6e6e" stroke-width="1.5"/></svg>
<div class="s" style="left:190px;top:988px;"><u>6</u>: Logcat</div>
<svg style="position:absolute;left:255px;top:987px;" width="15" height="15" viewBox="0 0 15 15"><circle cx="9.5" cy="9" r="3.8" fill="#f5c28a"/><path d="M5.5 8a4 3.5 0 0 1 8 0v-1.5a4 3.5 0 0 0-8 0z" fill="#777"/><path d="M5.5 7.5a4 4 0 0 1 8 0h-8z" fill="#777"/><rect x="6" y="12.5" width="7" height="2.5" fill="#3d9ad9"/><circle cx="4.5" cy="4" r="3.3" fill="#fff" stroke="#777" stroke-width="1"/><path d="M3 3.3h3M3 5h3" stroke="#777" stroke-width="0.8"/></svg>
<div class="s" style="left:273px;top:988px;">TODO</div>
<svg style="position:absolute;left:1811px;top:987px;" width="17" height="15" viewBox="0 0 17 15"><circle cx="8" cy="7" r="6.8" fill="#7cc780"/><path d="M11 11l5 3.5-6-1z" fill="#7cc780"/><text x="8" y="10.5" font-family="Liberation Sans" font-size="9" fill="#222" text-anchor="middle">1</text></svg>
<div class="s" style="left:1832px;top:988px;">Event Log</div>
<div style="left:7px;top:1010px;width:14px;height:6px;border:1px solid #777;background:#eee"></div>
<div class="s" style="left:32px;top:1010px;color:#000">Gradle build finished in 784 ms (2 minutes ago)</div>
<div class="s" style="left:1596px;top:1010px;color:#000">28:30&nbsp;&nbsp; CRLF&nbsp;&nbsp; UTF-8&nbsp;&nbsp;&nbsp; &#9679;</div>
<div style="left:612px;top:158px;width:836px;height:694px;background:#000;border-radius:4px 4px 0 0"></div>
<div style="left:613px;top:159px;width:834px;height:692px;background:linear-gradient(#e8eef6 0,#e8eef6 1px,transparent 1px);border-radius:3px 3px 0 0"></div>
<div style="left:613px;top:159px;width:834px;height:692px;background:linear-gradient(180deg,#95b0d3 0px,#a6bedd 15px,#bad0ea 30px,#bcd3ec 100%);border-radius:3px 3px 0 0;border-top:1px solid #dce6f2;border-left:1px solid #dce6f2"></div>
<div style="left:620px;top:188px;width:820px;height:656px;background:#f0f0f0"></div>
<svg style="position:absolute;left:621px;top:169px;" width="18" height="13" viewBox="0 0 18 13"><path d="M4 2.5l2 2.5M14 2.5l-2 2.5" stroke="#8dc151" stroke-width="1.2"/><path d="M1 11a8 7 0 0 1 16 0z" fill="#8dc151"/><circle cx="5.5" cy="7.5" r="1" fill="#fff"/><circle cx="12.5" cy="7.5" r="1" fill="#fff"/></svg>
<div class="s" style="left:643px;top:170px;">Project Structure</div>
<div style="left:1407px;top:168px;width:31px;height:17px;border:1px solid #4a1a20;border-radius:3px;background:linear-gradient(#eba796 0,#e0907c 40%,#c2472b 42%,#c9573c 70%,#d47560 100%);box-shadow:inset 0 0 0 1px rgba(255,230,220,0.55)"></div>
<svg style="position:absolute;left:1416px;top:171px;" width="13" height="11" viewBox="0 0 13 11"><path d="M2.5 2.8l8 5.6M10.5 2.8l-8 5.6" stroke="#3a3f55" stroke-width="4.2" stroke-linecap="round"/><path d="M2.5 2.8l8 5.6M10.5 2.8l-8 5.6" stroke="#fff" stroke-width="2.4" stroke-linecap="round"/></svg>
<svg style="position:absolute;left:636px;top:199px;" width="14" height="14" viewBox="0 0 14 14"><path d="M7 1v12M1 7h12" stroke="#2e9a3c" stroke-width="2"/></svg>
<svg style="position:absolute;left:663px;top:199px;" width="14" height="14" viewBox="0 0 14 14"><path d="M1 6.5h12" stroke="#d24b43" stroke-width="2"/></svg>
<div style="left:630px;top:220px;width:118px;height:573px;background:#fff;border:1px solid #b4b4b4"></div>
<div class="s" style="left:633px;top:224px;">SDK Location</div>
<div class="s" style="left:633px;top:243px;">Project</div>
<div style="left:631px;top:271px;width:1px;height:1px;background:#999"></div>
<div class="s b g" style="left:635px;top:263px;">Developer Services</div>
<div class="s" style="left:633px;top:283px;">Ads</div>
<div class="s" style="left:633px;top:302px;">Authentication</div>
<div class="s" style="left:633px;top:321px;">Notifications</div>
<div style="left:631px;top:350px;width:32px;height:1px;background:#a8a8a8"></div>
<div class="s b g" style="left:665px;top:342px;">Modules</div>
<div style="left:717px;top:350px;width:30px;height:1px;background:#a8a8a8"></div>
<div style="left:631px;top:359px;width:116px;height:19px;background:#1f77c9"></div>
<svg style="position:absolute;left:633px;top:362px;" width="17" height="14" viewBox="0 0 17 14"><path d="M1 1h5l2 2h6v10h-13z" fill="#7e98b2"/><circle cx="12.5" cy="11" r="2.5" fill="#6cc04a"/></svg>
<div class="s" style="left:653px;top:362px;color:#fff">app</div>
<svg style="position:absolute;left:633px;top:381px;" width="17" height="14" viewBox="0 0 17 14"><path d="M1 1h5l2 2h7v10h-14z" fill="#a9b4bf"/><path d="M7 9h7v2a2.5 2.5 0 0 1-2.5 2.5h-2a2.5 2.5 0 0 1-2.5-2.5z" fill="#40a6de"/><path d="M14 10h2v1.5h-2z" fill="#40a6de"/></svg>
<div class="s" style="left:653px;top:381px;letter-spacing:-0.3px">RFIDAPI3Library</div>
<svg style="position:absolute;left:749px;top:484px;" width="4" height="15" viewBox="0 0 4 15"><path d="M1 1v14M3 1v14" stroke="#b0b0b0" stroke-dasharray="1 1"/></svg>
<div style="left:757px;top:195px;width:65px;height:21px;background:linear-gradient(#f6f6f6,#e6e6e6);border:1px solid #b9b9b9;border-bottom:none;border-radius:3px 3px 0 0"></div>
<div class="s" style="left:763px;top:200px;">Properties</div>
<div style="left:824px;top:195px;width:51px;height:21px;background:linear-gradient(#f6f6f6,#e6e6e6);border:1px solid #b9b9b9;border-bottom:none;border-radius:3px 3px 0 0"></div>
<div class="s" style="left:830px;top:200px;">Signing</div>
<div style="left:877px;top:195px;width:48px;height:21px;background:linear-gradient(#f6f6f6,#e6e6e6);border:1px solid #b9b9b9;border-bottom:none;border-radius:3px 3px 0 0"></div>
<div class="s" style="left:882px;top:200px;">Flavors</div>
<div style="left:926px;top:195px;width:74px;height:21px;background:linear-gradient(#f6f6f6,#e6e6e6);border:1px solid #b9b9b9;border-bottom:none;border-radius:3px 3px 0 0"></div>
<div class="s" style="left:932px;top:200px;">Build Types</div>
<div style="left:756px;top:215px;width:674px;height:578px;background:#f0f0f0;border:1px solid #c6c6c6;border-top:2px solid #c9dbf0"></div>
<div style="left:999px;top:193px;width:88px;height:23px;background:#aac2e3;border:1px solid #8fa9cc;border-bottom:none;border-radius:3px 3px 0 0"></div>
<div class="s" style="left:1006px;top:198px;">Dependencies</div>
<div style="left:764px;top:223px;width:629px;height:565px;background:#fff;border:1px solid #b4b4b4"></div>
<div style="left:765px;top:224px;width:627px;height:16px;background:linear-gradient(#ffffff,#e9e9e9);border-bottom:1px solid #bcbcbc"></div>
<div style="left:1271px;top:226px;width:1px;height:13px;background:#cfcfcf"></div>
<div class="s" style="left:1316px;top:226px;">Scope</div>
<div class="s" style="left:768px;top:245px;">{include=[*.jar], dir=libs}</div>
<div class="s" style="left:769px;top:266px;font-size:17px;font-weight:bold;font-style:italic;color:#ff6a00;transform:scaleX(0.9);transform-origin:0 0">m</div>
<div class="s" style="left:786px;top:267px;">com.android.support:appcompat-v7:27.1.1</div>
<div class="s" style="left:769px;top:288px;font-size:17px;font-weight:bold;font-style:italic;color:#ff6a00;transform:scaleX(0.9);transform-origin:0 0">m</div>
<div class="s" style="left:786px;top:289px;">com.android.support.constraint:constraint-layout:1.1.3</div>
<div class="s" style="left:769px;top:310px;font-size:17px;font-weight:bold;font-style:italic;color:#ff6a00;transform:scaleX(0.9);transform-origin:0 0">m</div>
<div class="s" style="left:786px;top:311px;">com.android.support:design:27.1.1</div>
<div class="s" style="left:769px;top:332px;font-size:17px;font-weight:bold;font-style:italic;color:#ff6a00;transform:scaleX(0.9);transform-origin:0 0">m</div>
<div class="s" style="left:786px;top:333px;">junit:junit:4.12</div>
<div class="s" style="left:769px;top:354px;font-size:17px;font-weight:bold;font-style:italic;color:#ff6a00;transform:scaleX(0.9);transform-origin:0 0">m</div>
<div class="s" style="left:786px;top:355px;">com.android.support.test:runner:1.0.2</div>
<div class="s" style="left:769px;top:376px;font-size:17px;font-weight:bold;font-style:italic;color:#ff6a00;transform:scaleX(0.9);transform-origin:0 0">m</div>
<div class="s" style="left:786px;top:377px;">com.android.support.test.espresso:espresso-core:3.0.2</div>
<div class="s" style="left:1277px;top:245px;width:110px;overflow:hidden">Implementation</div>
<svg style="position:absolute;left:1380px;top:250px;" width="8" height="5" viewBox="0 0 8 5"><path d="M0 0h7l-3.5 4z" fill="#3d8fd1"/></svg>
<div class="s" style="left:1277px;top:267px;width:110px;overflow:hidden">Implementation</div>
<svg style="position:absolute;left:1380px;top:272px;" width="8" height="5" viewBox="0 0 8 5"><path d="M0 0h7l-3.5 4z" fill="#3d8fd1"/></svg>
<div class="s" style="left:1277px;top:289px;width:110px;overflow:hidden">Implementation</div>
<svg style="position:absolute;left:1380px;top:294px;" width="8" height="5" viewBox="0 0 8 5"><path d="M0 0h7l-3.5 4z" fill="#3d8fd1"/></svg>
<div class="s" style="left:1277px;top:311px;width:110px;overflow:hidden">Implementation</div>
<svg style="position:absolute;left:1380px;top:316px;" width="8" height="5" viewBox="0 0 8 5"><path d="M0 0h7l-3.5 4z" fill="#3d8fd1"/></svg>
<div class="s" style="left:1277px;top:333px;width:110px;overflow:hidden">Unit Test impleme...</div>
<svg style="position:absolute;left:1380px;top:338px;" width="8" height="5" viewBox="0 0 8 5"><path d="M0 0h7l-3.5 4z" fill="#3d8fd1"/></svg>
<div class="s" style="left:1277px;top:355px;width:110px;overflow:hidden">Test implementation</div>
<svg style="position:absolute;left:1380px;top:360px;" width="8" height="5" viewBox="0 0 8 5"><path d="M0 0h7l-3.5 4z" fill="#3d8fd1"/></svg>
<div class="s" style="left:1277px;top:377px;width:110px;overflow:hidden">Test implementation</div>
<svg style="position:absolute;left:1380px;top:382px;" width="8" height="5" viewBox="0 0 8 5"><path d="M0 0h7l-3.5 4z" fill="#3d8fd1"/></svg>
<div style="left:1392px;top:223px;width:29px;height:565px;background:#f0f0f0;border:1px solid #b4b4b4;border-left:1px solid #c8c8c8"></div>
<svg style="position:absolute;left:1399px;top:230px;" width="14" height="14" viewBox="0 0 14 14"><path d="M7 1v12M1 7h12" stroke="#2e9a3c" stroke-width="2"/></svg>
<svg style="position:absolute;left:1400px;top:309px;" width="12" height="12" viewBox="0 0 12 12"><path d="M6 0v8" stroke="#b8b8b8" stroke-width="2.5"/><path d="M1 6h10l-5 5z" fill="#b8b8b8"/></svg>
<div style="left:1392px;top:249px;width:150px;height:59px;background:#fff;border:1px solid #a0a0a0"></div>
<div style="left:1393px;top:288px;width:148px;height:19px;background:#1f77c9"></div>
<div class="s" style="left:1397px;top:252px;font-size:17px;font-weight:bold;font-style:italic;color:#ff6a00;transform:scaleX(0.9);transform-origin:0 0">m</div>
<div class="s" style="left:1415px;top:253px;"><u>1</u></div>
<div class="s" style="left:1427px;top:253px;">Library dependency</div>
<svg style="position:absolute;left:1396px;top:271px;" width="16" height="14" viewBox="0 0 16 14"><path d="M1 1h5l2 2h2v3h-2v7h-7z" fill="#a9b4bf"/><path d="M1 3h9v10h-9z" fill="#a9b4bf"/><rect x="6" y="8" width="2" height="5" fill="#6abf4b"/><rect x="9" y="6" width="2" height="7" fill="#6e8aa8"/><rect x="12" y="9" width="2" height="4" fill="#40a6de"/></svg>
<div class="s" style="left:1415px;top:272px;"><u>2</u></div>
<div class="s" style="left:1427px;top:272px;">Jar dependency</div>
<svg style="position:absolute;left:1396px;top:290px;" width="16" height="14" viewBox="0 0 16 14"><path d="M1 1h5l2 2h6v10h-13z" fill="#7e98b2"/><circle cx="12.5" cy="11" r="2.5" fill="#6cc04a"/></svg>
<div class="s" style="left:1415px;top:291px;color:#fff"><u>3</u></div>
<div class="s" style="left:1427px;top:291px;color:#fff">Module dependency</div>
<div style="left:1295px;top:813px;width:50px;height:22px;background:#e1e1e1;border:2px solid #0a78d7"></div>
<div class="s" style="left:1311px;top:817px;">OK</div>
<div style="left:1357px;top:813px;width:70px;height:22px;background:#e1e1e1;border:1px solid #adadad"></div>
<div class="s" style="left:1373px;top:817px;">Cancel</div>
</body></html>
